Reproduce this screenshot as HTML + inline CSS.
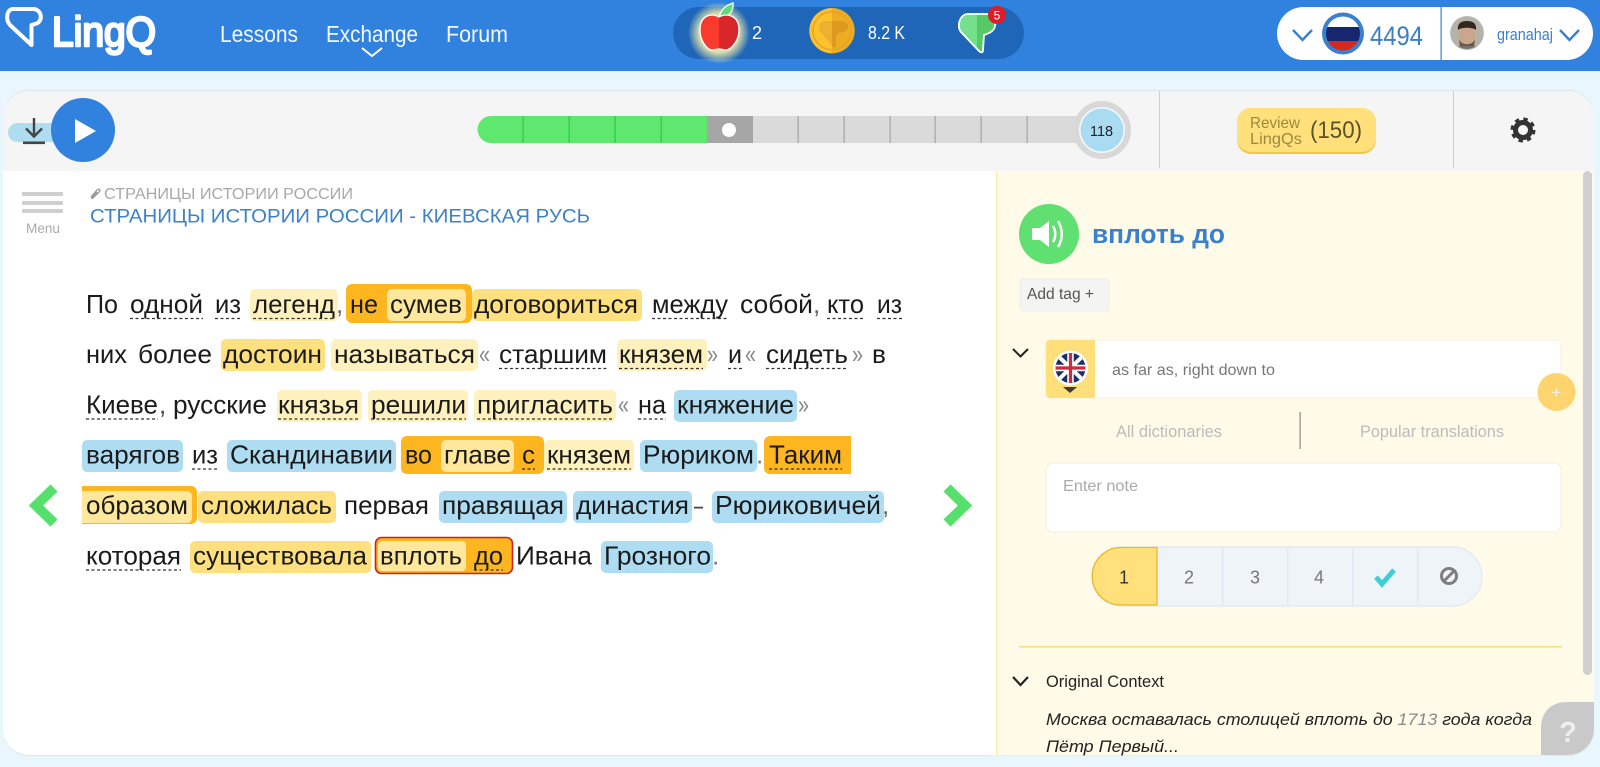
<!DOCTYPE html>
<html lang="ru">
<head>
<meta charset="utf-8">
<title>LingQ</title>
<style>
html,body{margin:0;padding:0;width:1600px;height:767px;overflow:hidden;background:#eaf6fd}
svg{display:block}
text{font-family:"Liberation Sans",sans-serif}
.r text{font-size:26px;fill:#1b1b1b}
.u line{stroke:#333;stroke-width:1.2;stroke-dasharray:3 2.5}
</style>
</head>
<body>
<svg width="1600" height="767" viewBox="0 0 1600 767" xmlns="http://www.w3.org/2000/svg">
<defs>
<radialGradient id="glow"><stop offset="0.62" stop-color="#fff6a8" stop-opacity=".85"/><stop offset="1" stop-color="#fff6a8" stop-opacity="0"/></radialGradient>
<clipPath id="card"><rect x="3" y="91" width="1591" height="664" rx="26"/></clipPath>
<clipPath id="fl"><circle cx="1343" cy="33.500" r="17"/></clipPath>
<clipPath id="uk"><circle cx="1070.500" cy="368" r="15"/></clipPath>
<clipPath id="av"><circle cx="1467" cy="33" r="16"/></clipPath>
<clipPath id="an"><path d="M719 17c-6-4-19-3-19 13 0 12 8 20 12 20 3 0 5-1 7-1s4 1 7 1c4 0 13-8 13-20 0-16-14-17-20-13z"/></clipPath>
<clipPath id="co"><circle cx="832" cy="30.700" r="22.700"/></clipPath>
<clipPath id="gp"><path d="M968 14h20c6 0 9 4 7 12-1 6-8 8-11 9l-1 15c0 3-2 3-4 1l-18-19c-5-6-1-18 7-18z"/></clipPath>
</defs>

<!-- header -->
<rect width="1600" height="71" fill="#3182de"/>
<path d="M13 9H33c9 0 11 13 2 15l-3.500 1V45L10 25C5 19 7 9 13 9z" fill="none" stroke="#fff" stroke-width="4" stroke-linejoin="round"/>
<text x="52" y="46" font-size="42" fill="#fff" stroke="#fff" stroke-width="2.600" stroke-linejoin="round" textLength="104" lengthAdjust="spacingAndGlyphs">LingQ</text>
<g fill="#f2f8fe" font-size="23">
<text x="220" y="42" textLength="78" lengthAdjust="spacingAndGlyphs">Lessons</text>
<text x="326" y="42" textLength="92" lengthAdjust="spacingAndGlyphs">Exchange</text>
<text x="446" y="42" textLength="62" lengthAdjust="spacingAndGlyphs">Forum</text>
</g>
<path d="M362 48l10 8 10-8" fill="none" stroke="#fff" stroke-width="2"/>

<!-- stats pill -->
<rect x="673" y="7" width="351" height="52" rx="26" fill="#2066b8"/>
<circle cx="719" cy="33" r="31" fill="url(#glow)"/>
<path d="M719 19c1-9 7-14 14-16 1 7-3 14-14 16z" fill="#5fdc78" stroke="#fff" stroke-width="1.300"/>
<g clip-path="url(#an)"><rect x="698" y="14" width="21" height="38" fill="#fb3a2e"/><rect x="719" y="14" width="22" height="38" fill="#d8262a"/></g>
<path d="M719 17c-6-4-19-3-19 13 0 12 8 20 12 20 3 0 5-1 7-1s4 1 7 1c4 0 13-8 13-20 0-16-14-17-20-13z" fill="none" stroke="#fff" stroke-width="1.300"/>
<text x="752" y="39" font-size="18" fill="#fff" textLength="10" lengthAdjust="spacingAndGlyphs">2</text>
<g clip-path="url(#co)"><rect x="809" y="7" width="23" height="48" fill="#fcc22e"/><rect x="832" y="7" width="24" height="48" fill="#eeac22"/></g>
<circle cx="832" cy="30.700" r="19" fill="none" stroke="#e9a424" stroke-width="1.500"/>
<path d="M826 21h14c6 0 9 3 8 7-1 3-5 5-10 5l-2 3v11c-2 1-3 0-4-1l-12-15c-3-5 0-10 6-10z" fill="#eeb030"/>
<path d="M832 21h8c6 0 9 3 8 7-1 3-5 5-10 5l-2 3v11c-2 1-3 0-4-1z" fill="#dc9a20"/>
<text x="868" y="39" font-size="18" fill="#fff" textLength="37" lengthAdjust="spacingAndGlyphs">8.2 K</text>
<g clip-path="url(#gp)"><rect x="955" y="10" width="22" height="45" fill="#74e08c"/><rect x="977" y="10" width="22" height="45" fill="#55c966"/></g>
<path d="M968 14h20c6 0 9 4 7 12-1 6-8 8-11 9l-1 15c0 3-2 3-4 1l-18-19c-5-6-1-18 7-18z" fill="none" stroke="#fff" stroke-width="1.800"/>
<circle cx="997" cy="15" r="9" fill="#e01b2b"/>
<text x="997" y="19.500" font-size="12" fill="#fff" text-anchor="middle">5</text>

<!-- user pill -->
<rect x="1277" y="7" width="316" height="53" rx="26.500" fill="#fff"/>
<rect x="1440.500" y="7" width="1.200" height="53" fill="#3a80d0"/>
<path d="M1293 30l9.500 10 9.500-10" fill="none" stroke="#3a80d0" stroke-width="2.400"/>
<circle cx="1343" cy="33.500" r="21" fill="#3a80d0"/>
<g clip-path="url(#fl)"><rect x="1325" y="16" width="36" height="12" fill="#fff"/><rect x="1325" y="27" width="36" height="14" fill="#17276e"/><rect x="1325" y="41" width="36" height="10" fill="#d6281c"/></g>
<text x="1370" y="45" font-size="27" fill="#3a7fc8" textLength="53" lengthAdjust="spacingAndGlyphs">4494</text>
<circle cx="1467" cy="33" r="17" fill="#bbb"/>
<g clip-path="url(#av)"><rect x="1450" y="16" width="34" height="34" fill="#b5b3a8"/><ellipse cx="1467" cy="35" rx="8.500" ry="11" fill="#c9a68c"/><path d="M1458 30c-1-7 4-9 9-9s10 2 9 9c-3-3-15-3-18 0z" fill="#33281f"/><path d="M1459 39c2 7 14 7 16 0l-1 8h-14z" fill="#6b5646"/><rect x="1452" y="46" width="30" height="6" fill="#77716a"/></g>
<text x="1497" y="40" font-size="17" fill="#3a7fc8" textLength="56" lengthAdjust="spacingAndGlyphs">granahaj</text>
<path d="M1560 30l9.500 10 9.500-10" fill="none" stroke="#3a80d0" stroke-width="2.400"/>

<!-- card -->
<rect x="3" y="90" width="1591" height="666" rx="26" fill="#dde6ea"/>
<g clip-path="url(#card)">
<rect x="3" y="91" width="1591" height="664" fill="#fff"/>
<rect x="3" y="91" width="1591" height="80" fill="#f5f5f5"/>
<rect x="996" y="171" width="598" height="584" fill="#fffbe8"/>
<rect x="996" y="171" width="1.500" height="584" fill="#fbeeb0"/>
<rect x="1159" y="91" width="1" height="77" fill="#cfcfcf"/>
<rect x="1453" y="91" width="1" height="77" fill="#cfcfcf"/>
<path d="M1541 755V728c0-16 10-26 26-26h27v27c0 16-10 26-26 26z" fill="#c9c9c9"/>
<text x="1568" y="742" font-size="29" font-weight="700" fill="#eee" text-anchor="middle">?</text>
<rect x="1583" y="171" width="9" height="504" rx="4.500" fill="#cfcfcf"/>
</g>

<!-- player -->
<rect x="8" y="123" width="60" height="19" rx="9.500" fill="#aedcf0"/>
<path d="M34 118v18M26 128.500l8 8 8-8" fill="none" stroke="#444" stroke-width="2.400"/>
<rect x="23" y="141.500" width="22" height="2.600" fill="#444"/>
<circle cx="83" cy="130" r="32" fill="#3182de"/>
<path d="M75 119l21 12-21 12z" fill="#fff"/>

<!-- progress -->
<path d="M491 116H707V143H491a13.500 13.500 0 0 1 0-27z" fill="#5fe870"/>
<rect x="707" y="116" width="46" height="27" fill="#a6a6a6"/>
<rect x="753" y="116" width="330" height="27" fill="#dadada"/>
<g fill="#30cc48"><rect x="522.500" y="116" width="1.300" height="27"/><rect x="568.500" y="116" width="1.300" height="27"/><rect x="614.500" y="116" width="1.300" height="27"/><rect x="660.500" y="116" width="1.300" height="27"/></g>
<g fill="#a8a8a8"><rect x="797.500" y="116" width="1.300" height="27"/><rect x="843.500" y="116" width="1.300" height="27"/><rect x="889.500" y="116" width="1.300" height="27"/><rect x="934.500" y="116" width="1.300" height="27"/><rect x="980.500" y="116" width="1.300" height="27"/><rect x="1026.500" y="116" width="1.300" height="27"/></g>
<circle cx="729" cy="130" r="7" fill="#fff"/>
<circle cx="1102" cy="130" r="29" fill="#d8d8d8"/>
<circle cx="1102" cy="130" r="23" fill="#f5f9fb"/>
<circle cx="1102" cy="130" r="21.500" fill="#a9dbf1"/>
<text x="1090" y="136" font-size="15" fill="#222" textLength="23" lengthAdjust="spacingAndGlyphs">118</text>

<!-- review -->
<rect x="1237" y="108" width="139" height="46" rx="14" fill="#efc945"/>
<rect x="1237" y="108" width="139" height="44" rx="14" fill="#ffe07a"/>
<text x="1250" y="128" font-size="16" fill="#9a8a40" textLength="50" lengthAdjust="spacingAndGlyphs">Review</text>
<text x="1250" y="144" font-size="16" fill="#9a8a40" textLength="52" lengthAdjust="spacingAndGlyphs">LingQs</text>
<text x="1310" y="138" font-size="24" fill="#5a5228" textLength="52" lengthAdjust="spacingAndGlyphs">(150)</text>
<circle cx="1523" cy="130" r="7.500" fill="none" stroke="#333" stroke-width="5"/>
<circle cx="1523" cy="130" r="10.500" fill="none" stroke="#333" stroke-width="4" stroke-dasharray="4.200 4.050"/>

<!-- menu + titles -->
<g fill="#cfcfcf"><rect x="22" y="192" width="41" height="4" rx="1"/><rect x="22" y="201" width="41" height="4" rx="1"/><rect x="22" y="209" width="41" height="4" rx="1"/></g>
<text x="26" y="233" font-size="14" fill="#aaa" textLength="34" lengthAdjust="spacingAndGlyphs">Menu</text>
<path d="M91 197l6-7c2-2 4 0 2 2l-6 6c-1 1-2 0-1-1l5-5" fill="none" stroke="#999" stroke-width="1.300"/>
<text x="104" y="199" font-size="16" fill="#a8a8a8" textLength="249" lengthAdjust="spacingAndGlyphs">СТРАНИЦЫ ИСТОРИИ РОССИИ</text>
<text x="90" y="222.500" font-size="19" fill="#3d82c8" textLength="500" lengthAdjust="spacingAndGlyphs">СТРАНИЦЫ ИСТОРИИ РОССИИ - КИЕВСКАЯ РУСЬ</text>

<!-- reading highlights -->
<g fill="#fff1bd">
<rect x="250" y="289" width="88" height="32" rx="5"/>
<rect x="331" y="339" width="147" height="32" rx="5"/>
<rect x="617" y="339" width="90" height="32" rx="5"/>
<rect x="277" y="390" width="85" height="32" rx="5"/>
<rect x="368" y="390" width="100" height="32" rx="5"/>
<rect x="474" y="390" width="142" height="32" rx="5"/>
<rect x="544" y="440" width="90" height="32" rx="5"/>
</g>
<g fill="#ffe07e">
<rect x="472" y="289" width="170" height="32" rx="5"/>
<rect x="221" y="339" width="104" height="32" rx="5"/>
<rect x="198" y="491" width="138" height="32" rx="5"/>
<rect x="190" y="541" width="181" height="32" rx="5"/>
</g>
<g fill="#aeddf3">
<rect x="674" y="390" width="123" height="32" rx="5"/>
<rect x="82" y="440" width="101" height="32" rx="5"/>
<rect x="227" y="440" width="169" height="32" rx="5"/>
<rect x="640" y="440" width="117" height="32" rx="5"/>
<rect x="439" y="491" width="128" height="32" rx="5"/>
<rect x="573" y="491" width="119" height="32" rx="5"/>
<rect x="712" y="491" width="172" height="32" rx="5"/>
<rect x="601" y="541" width="112" height="32" rx="5"/>
</g>
<g fill="#fdb61f">
<rect x="346" y="284" width="126" height="39" rx="6"/>
<rect x="401" y="436" width="143" height="38" rx="6"/>
<path d="M770 436H851V474H770a6 6 0 0 1-6-6V442a6 6 0 0 1 6-6z"/>
<path d="M82 486H191a6 6 0 0 1 6 6V518a6 6 0 0 1-6 6H82z"/>
<rect x="375.500" y="537.500" width="137" height="36" rx="6" stroke="#c8231c" stroke-width="1.600"/>
</g>
<g fill="#ffe89b">
<rect x="387" y="289" width="79" height="32" rx="5"/>
<rect x="441" y="440" width="73" height="32" rx="5"/>
<path d="M82 491H187a5 5 0 0 1 5 5V518a5 5 0 0 1-5 5H82z"/>
<rect x="378" y="541" width="88" height="30" rx="4"/>
</g>

<!-- dashed underlines -->
<g class="u">
<line x1="130" y1="318.500" x2="203" y2="318.500"/><line x1="215" y1="318.500" x2="241" y2="318.500"/><line x1="253" y1="318.500" x2="335" y2="318.500"/><line x1="652" y1="318.500" x2="728" y2="318.500"/><line x1="827" y1="318.500" x2="864" y2="318.500"/><line x1="877" y1="318.500" x2="902" y2="318.500"/>
<line x1="499" y1="368.500" x2="607" y2="368.500"/><line x1="619" y1="368.500" x2="703" y2="368.500"/><line x1="728" y1="368.500" x2="742" y2="368.500"/><line x1="766" y1="368.500" x2="848" y2="368.500"/>
<line x1="86" y1="419" x2="158" y2="419"/><line x1="278" y1="419" x2="359" y2="419"/><line x1="371" y1="419" x2="466" y2="419"/><line x1="477" y1="419" x2="613" y2="419"/><line x1="638" y1="419" x2="666" y2="419"/>
<line x1="192" y1="469" x2="218" y2="469"/><line x1="522" y1="469" x2="535" y2="469"/><line x1="547" y1="469" x2="631" y2="469"/><line x1="769" y1="469" x2="842" y2="469"/>
<line x1="86" y1="570" x2="181" y2="570"/><line x1="474" y1="570" x2="503" y2="570"/>
</g>

<!-- reading text -->
<g class="r">
<text x="86" y="313" textLength="32" lengthAdjust="spacingAndGlyphs">По</text>
<text x="130" y="313" textLength="73" lengthAdjust="spacingAndGlyphs">одной</text>
<text x="215" y="313" textLength="26" lengthAdjust="spacingAndGlyphs">из</text>
<text x="253" y="313" textLength="82" lengthAdjust="spacingAndGlyphs">легенд</text>
<text x="336" y="313" style="fill:#666">,</text>
<text x="350" y="313" textLength="28" lengthAdjust="spacingAndGlyphs">не</text>
<text x="390" y="313" textLength="72" lengthAdjust="spacingAndGlyphs">сумев</text>
<text x="474" y="313" textLength="164" lengthAdjust="spacingAndGlyphs">договориться</text>
<text x="652" y="313" textLength="76" lengthAdjust="spacingAndGlyphs">между</text>
<text x="740" y="313" textLength="73" lengthAdjust="spacingAndGlyphs">собой</text>
<text x="813" y="313" style="fill:#666">,</text>
<text x="827" y="313" textLength="37" lengthAdjust="spacingAndGlyphs">кто</text>
<text x="877" y="313" textLength="25" lengthAdjust="spacingAndGlyphs">из</text>

<text x="86" y="363" textLength="41" lengthAdjust="spacingAndGlyphs">них</text>
<text x="138" y="363" textLength="74" lengthAdjust="spacingAndGlyphs">более</text>
<text x="223" y="363" textLength="99" lengthAdjust="spacingAndGlyphs">достоин</text>
<text x="334" y="363" textLength="141" lengthAdjust="spacingAndGlyphs">называться</text>
<text x="479" y="363" style="fill:#888" textLength="11" lengthAdjust="spacingAndGlyphs">«</text>
<text x="499" y="363" textLength="108" lengthAdjust="spacingAndGlyphs">старшим</text>
<text x="619" y="363" textLength="84" lengthAdjust="spacingAndGlyphs">князем</text>
<text x="707" y="363" style="fill:#888" textLength="11" lengthAdjust="spacingAndGlyphs">»</text>
<text x="728" y="363" textLength="14" lengthAdjust="spacingAndGlyphs">и</text>
<text x="745" y="363" style="fill:#888" textLength="11" lengthAdjust="spacingAndGlyphs">«</text>
<text x="766" y="363" textLength="82" lengthAdjust="spacingAndGlyphs">сидеть</text>
<text x="852" y="363" style="fill:#888" textLength="11" lengthAdjust="spacingAndGlyphs">»</text>
<text x="872" y="363" textLength="14" lengthAdjust="spacingAndGlyphs">в</text>

<text x="86" y="413.500" textLength="72" lengthAdjust="spacingAndGlyphs">Киеве</text>
<text x="159" y="413.500" style="fill:#444">,</text>
<text x="173" y="413.500" textLength="94" lengthAdjust="spacingAndGlyphs">русские</text>
<text x="278" y="413.500" textLength="81" lengthAdjust="spacingAndGlyphs">князья</text>
<text x="371" y="413.500" textLength="95" lengthAdjust="spacingAndGlyphs">решили</text>
<text x="477" y="413.500" textLength="136" lengthAdjust="spacingAndGlyphs">пригласить</text>
<text x="618" y="413.500" style="fill:#888" textLength="11" lengthAdjust="spacingAndGlyphs">«</text>
<text x="638" y="413.500" textLength="28" lengthAdjust="spacingAndGlyphs">на</text>
<text x="677" y="413.500" textLength="117" lengthAdjust="spacingAndGlyphs">княжение</text>
<text x="798" y="413.500" style="fill:#888" textLength="11" lengthAdjust="spacingAndGlyphs">»</text>

<text x="86" y="463.500" textLength="94" lengthAdjust="spacingAndGlyphs">варягов</text>
<text x="192" y="463.500" textLength="26" lengthAdjust="spacingAndGlyphs">из</text>
<text x="230" y="463.500" textLength="163" lengthAdjust="spacingAndGlyphs">Скандинавии</text>
<text x="405" y="463.500" textLength="27" lengthAdjust="spacingAndGlyphs">во</text>
<text x="444" y="463.500" textLength="67" lengthAdjust="spacingAndGlyphs">главе</text>
<text x="522" y="463.500" textLength="13" lengthAdjust="spacingAndGlyphs">с</text>
<text x="547" y="463.500" textLength="84" lengthAdjust="spacingAndGlyphs">князем</text>
<text x="643" y="463.500" textLength="111" lengthAdjust="spacingAndGlyphs">Рюриком</text>
<text x="756" y="463.500" style="fill:#777">.</text>
<text x="769" y="463.500" textLength="73" lengthAdjust="spacingAndGlyphs">Таким</text>

<text x="86" y="514" textLength="102" lengthAdjust="spacingAndGlyphs">образом</text>
<text x="201" y="514" textLength="131" lengthAdjust="spacingAndGlyphs">сложилась</text>
<text x="344" y="514" textLength="85" lengthAdjust="spacingAndGlyphs">первая</text>
<text x="442" y="514" textLength="122" lengthAdjust="spacingAndGlyphs">правящая</text>
<text x="576" y="514" textLength="113" lengthAdjust="spacingAndGlyphs">династия</text>
<text x="694" y="514" textLength="9" lengthAdjust="spacingAndGlyphs" style="fill:#444">–</text>
<text x="715" y="514" textLength="166" lengthAdjust="spacingAndGlyphs">Рюриковичей</text>
<text x="882" y="514" style="fill:#666">,</text>

<text x="86" y="564.500" textLength="95" lengthAdjust="spacingAndGlyphs">которая</text>
<text x="193" y="564.500" textLength="174" lengthAdjust="spacingAndGlyphs">существовала</text>
<text x="380" y="564.500" textLength="82" lengthAdjust="spacingAndGlyphs">вплоть</text>
<text x="474" y="564.500" textLength="29" lengthAdjust="spacingAndGlyphs">до</text>
<text x="516" y="564.500" textLength="76" lengthAdjust="spacingAndGlyphs">Ивана</text>
<text x="604" y="564.500" textLength="107" lengthAdjust="spacingAndGlyphs">Грозного</text>
<text x="712" y="564.500" style="fill:#777">.</text>
</g>

<!-- page arrows -->
<path d="M54 488L36 505.500 54 523" fill="none" stroke="#55e06b" stroke-width="10"/>
<path d="M947 488L965 505.500 947 523" fill="none" stroke="#55e06b" stroke-width="10"/>

<!-- side panel -->
<circle cx="1049" cy="234" r="30" fill="#5fe070"/>
<path d="M1032 228h8l9-7v26l-9-7h-8z" fill="#fff"/>
<path d="M1053 226c3 5 3 11 0 16M1058 221c5 8 5 18 0 26" fill="none" stroke="#fff" stroke-width="2.500"/>
<text x="1092" y="243" font-size="27" font-weight="700" fill="#3a80d0" textLength="133" lengthAdjust="spacingAndGlyphs">вплоть до</text>

<rect x="1020" y="279" width="89" height="32" rx="3" fill="#f4f4f2" stroke="#eeeeea"/>
<text x="1027" y="299" font-size="16" fill="#555" textLength="67" lengthAdjust="spacingAndGlyphs">Add tag +</text>

<path d="M1013 349l7.500 7.500 7.500-7.500" fill="none" stroke="#222" stroke-width="2"/>
<rect x="1046" y="340" width="515" height="58" rx="4" fill="#fff" stroke="#f5f0dc"/>
<path d="M1050 340h45v58h-45a4 4 0 0 1-4-4v-50a4 4 0 0 1 4-4z" fill="#ffdf7a"/>
<circle cx="1070.500" cy="368" r="17.500" fill="#fff"/>
<g clip-path="url(#uk)">
<rect x="1055" y="353" width="31" height="30" fill="#1d2c6b"/>
<path d="M1055 353l31 30M1086 353l-31 30" stroke="#fff" stroke-width="4"/>
<path d="M1070.500 352v32M1054 368h33" stroke="#fff" stroke-width="6.500"/>
<path d="M1070.500 352v32M1054 368h33" stroke="#cf2b3a" stroke-width="3.200"/>
</g>
<path d="M1063 387h14l-7 6z" fill="#3c3c3c"/>
<text x="1112" y="375" font-size="16" fill="#777" textLength="163" lengthAdjust="spacingAndGlyphs">as far as, right down to</text>
<circle cx="1556.500" cy="392" r="19" fill="#fdd46e"/>
<text x="1556.500" y="398" font-size="17" fill="#fff5d8" text-anchor="middle">+</text>
<text x="1116" y="437" font-size="17" fill="#bbb" textLength="106" lengthAdjust="spacingAndGlyphs">All dictionaries</text>
<rect x="1299.500" y="412" width="1.200" height="37" fill="#8a8a8a"/>
<text x="1360" y="437" font-size="17" fill="#bbb" textLength="144" lengthAdjust="spacingAndGlyphs">Popular translations</text>

<rect x="1046" y="463" width="515" height="69" rx="7" fill="#fff" stroke="#f3eedc"/>
<text x="1063" y="491" font-size="16" fill="#aaa" textLength="75" lengthAdjust="spacingAndGlyphs">Enter note</text>

<rect x="1092" y="547" width="390" height="59" rx="29.500" fill="#eff4f8" stroke="#e4eaf3" stroke-width="1.500"/>
<path d="M1157 547.500V605H1121a28.750 28.750 0 0 1 0-57.500z" fill="#ffe07a" stroke="#eab92c" stroke-width="1.300"/>
<g fill="#e1e8f3"><rect x="1222" y="548" width="1.500" height="57"/><rect x="1287" y="548" width="1.500" height="57"/><rect x="1352" y="548" width="1.500" height="57"/><rect x="1417" y="548" width="1.500" height="57"/></g>
<g font-size="18" text-anchor="middle" fill="#777">
<text x="1124" y="583.500" fill="#333">1</text>
<text x="1189" y="583.500">2</text>
<text x="1255" y="583.500">3</text>
<text x="1319" y="583.500">4</text>
</g>
<path d="M1376 577l6 7 12-14" fill="none" stroke="#3ecfd6" stroke-width="5"/>
<circle cx="1449" cy="576" r="7.500" fill="none" stroke="#7e7e7e" stroke-width="3"/>
<path d="M1444 581l10-10" stroke="#7e7e7e" stroke-width="3"/>

<rect x="1019" y="646" width="543" height="1.600" fill="#f6e37e"/>
<path d="M1013 677l7.500 8 7.500-8" fill="none" stroke="#222" stroke-width="2.200"/>
<text x="1046" y="687" font-size="17" fill="#222" textLength="118" lengthAdjust="spacingAndGlyphs">Original Context</text>
<text x="1046" y="725" font-size="16.500" font-style="italic" fill="#222" textLength="486" lengthAdjust="spacingAndGlyphs">Москва оставалась столицей вплоть до <tspan fill="#888">1713</tspan> года когда</text>
<text x="1046" y="752" font-size="16.500" font-style="italic" fill="#222" textLength="133" lengthAdjust="spacingAndGlyphs">Пётр Первый...</text>
<rect x="990" y="755.500" width="560" height="12" fill="#eaf6fd"/>
</svg>
</body>
</html>
